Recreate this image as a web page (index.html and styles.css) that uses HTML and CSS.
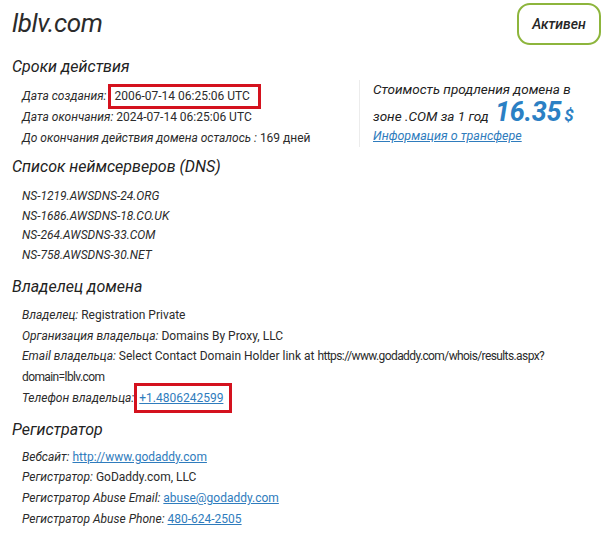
FILE: index.html
```html
<!DOCTYPE html>
<html lang="ru">
<head>
<meta charset="utf-8">
<title>lblv.com — WHOIS</title>
<link rel="stylesheet" href="styles.css">
</head>
<body>
<main class="whois">
  <header class="whois-head">
    <h1 class="domain">lblv.com</h1>
    <span class="status">Активен</span>
  </header>

  <section class="block block-dates">
    <h2 class="block-title">Сроки действия</h2>
    <div class="dates">
      <div class="rows rows-dates">
        <div class="row"><span class="label">Дата создания:</span><span class="value mark mark-date">2006-07-14 06:25:06 UTC</span></div>
        <div class="row"><span class="label">Дата окончания:</span> <span class="value">2024-07-14 06:25:06 UTC</span></div>
        <div class="row"><span class="label">До окончания действия домена осталось :</span> <span class="value">169 дней</span></div>
      </div>
      <aside class="renew">
        <div class="renew-line">Стоимость продления домена в</div>
        <div class="renew-line">зоне .COM за 1 год <span class="price">16.35</span><span class="cur">$</span></div>
        <div class="renew-line"><a class="link" href="#">Информация о трансфере</a></div>
      </aside>
    </div>
  </section>

  <section class="block block-ns">
    <h2 class="block-title">Список неймсерверов (DNS)</h2>
    <ul class="rows rows-ns">
      <li class="ns">NS-1219.AWSDNS-24.ORG</li>
      <li class="ns">NS-1686.AWSDNS-18.CO.UK</li>
      <li class="ns">NS-264.AWSDNS-33.COM</li>
      <li class="ns">NS-758.AWSDNS-30.NET</li>
    </ul>
  </section>

  <section class="block block-owner">
    <h2 class="block-title">Владелец домена</h2>
    <div class="rows rows-owner">
      <div class="row"><span class="label">Владелец:</span> <span class="value">Registration Private</span></div>
      <div class="row"><span class="label">Организация владельца:</span> <span class="value">Domains By Proxy, LLC</span></div>
      <div class="row row-wrap"><span class="label">Email владельца:</span> <span class="value">Select Contact Domain Holder link at <span class="url">https://www.godaddy.com/whois/results.aspx?<wbr>domain=lblv.com</span></span></div>
      <div class="row"><span class="label">Телефон владельца:</span> <a class="link mark mark-phone" href="#">+1.4806242599</a></div>
    </div>
  </section>

  <section class="block block-reg">
    <h2 class="block-title">Регистратор</h2>
    <div class="rows rows-reg">
      <div class="row"><span class="label">Вебсайт:</span> <a class="link" href="#">http://www.godaddy.com</a></div>
      <div class="row"><span class="label">Регистратор:</span> <span class="value">GoDaddy.com, LLC</span></div>
      <div class="row"><span class="label">Регистратор Abuse Email:</span> <a class="link" href="#">abuse@godaddy.com</a></div>
      <div class="row"><span class="label">Регистратор Abuse Phone:</span> <a class="link" href="#">480-624-2505</a></div>
    </div>
  </section>
</main>
</body>
</html>
```

FILE: styles.css
```css
html, body {
  margin: 0;
  padding: 0;
  background: #ffffff;
}

body {
  font-family: Roboto, "Open Sans", "Liberation Sans", sans-serif;
  color: #2b2b2b;
  font-size: 12px;
}

.whois {
  width: 609px;
  box-sizing: border-box;
  padding: 0 8px 0 12px;
}

/* header: domain name and status pill */
.whois-head {
  display: flex;
  justify-content: space-between;
  align-items: flex-start;
  height: 55px;
}

.domain {
  margin: 8px 0 0 0;
  font-size: 26px;
  line-height: 30px;
  font-weight: 400;
  font-style: italic;
  letter-spacing: -0.4px;
  color: #2b2b2b;
}

.status {
  margin-top: 3px;
  width: 84px;
  height: 42px;
  box-sizing: border-box;
  border: 2px solid #8db53c;
  border-radius: 13px;
  display: flex;
  align-items: center;
  justify-content: center;
  font-style: italic;
  font-size: 14px;
  font-weight: 500;
  color: #262626;
}

/* sections */
.block-title {
  margin: 0;
  font-size: 16px;
  line-height: 24px;
  font-weight: 400;
  font-style: italic;
  color: #222;
}

.rows {
  margin: 0;
  padding: 0 0 0 10px;
  list-style: none;
}

.row {
  white-space: nowrap;
}

.label {
  font-style: italic;
  color: #2b2b2b;
}

.value {
  color: #2b2b2b;
}

.link {
  color: #2f7cbd;
  text-decoration: underline;
}

/* red highlight frames */
.mark {
  border: 3px solid #d4121e;
}

.mark-date {
  margin-left: 2px;
  padding: 2px 8px 3px 3px;
}

.mark-phone {
  margin-left: -3px;
  padding: 5px 6px 5px 2px;
}

/* validity dates */
.dates {
  display: flex;
  margin-top: 7px;
}

.rows-dates {
  width: 337px;
  line-height: 21px;
}

.renew {
  margin-top: -6px;
  border-left: 1px solid #ececec;
  padding-left: 13px;
  height: 67px;
  font-style: italic;
  font-size: 13.5px;
  color: #222;
}

.renew-line {
  line-height: 23px;
  height: 23px;
  white-space: nowrap;
}

.renew-line:first-child {
  margin-top: -2px;
}

.price {
  font-size: 27px;
  font-weight: 700;
  color: #2b80c4;
  margin-left: 3px;
  letter-spacing: -0.3px;
}

.cur {
  font-size: 17px;
  font-weight: 700;
  color: #2b80c4;
  margin-left: 3px;
}

.renew .link {
  font-size: 12.5px;
}

/* gaps between sections */
.block-ns {
  margin-top: 6px;
}

.block-owner {
  margin-top: 9px;
}

.block-reg {
  margin-top: 9px;
}

/* name servers */
.rows-ns {
  margin-top: 8px;
  line-height: 19.7px;
}

.ns {
  font-style: italic;
}

.rows-owner,
.rows-reg {
  margin-top: 6px;
  line-height: 20.8px;
}

.rows-reg {
  margin-top: 5px;
  line-height: 20.6px;
}

.row-wrap {
  white-space: normal;
}

.url {
  letter-spacing: -0.6px;
}
```
